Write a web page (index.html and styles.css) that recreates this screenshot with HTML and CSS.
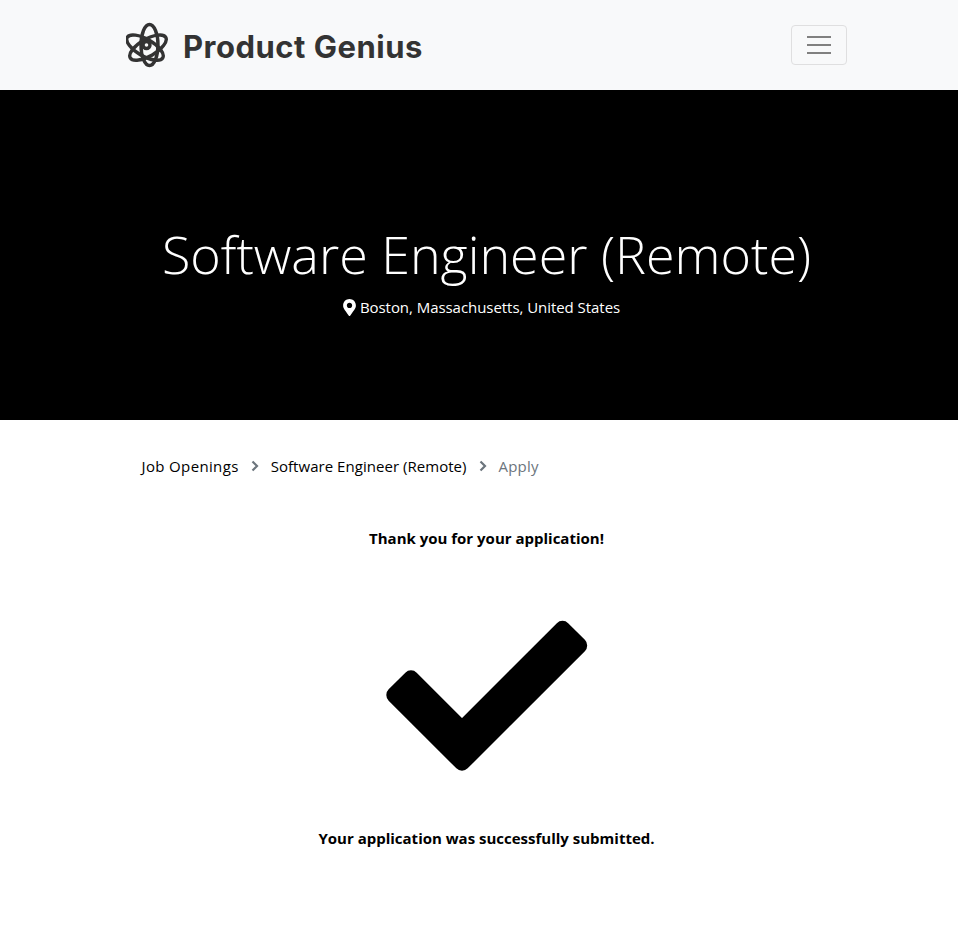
FILE: index.html
```html
<!DOCTYPE html>
<html lang="en">
<head>
<meta charset="utf-8">
<title>Software Engineer (Remote)</title>
<link rel="stylesheet" href="styles.css">
</head>
<body>
<header class="navbar">
  <div class="navbar-inner">
    <a class="brand" href="#">
      <svg class="brand-icon" viewBox="0 0 42 46" aria-hidden="true">
        <g class="atom">
          <ellipse cx="23.5" cy="23" rx="8.5" ry="20.5"/>
          <ellipse cx="23.5" cy="23" rx="8.5" ry="20.5" transform="rotate(60 20.5 23)"/>
          <ellipse cx="23.5" cy="23" rx="8.5" ry="20.5" transform="rotate(120 20.5 23)"/>
          <circle cx="20.5" cy="23" r="3.5"/>
        </g>
      </svg>
      <span class="brand-name">Product Genius</span>
    </a>
    <button class="toggler" type="button" aria-label="Menu">
      <span class="bar"></span><span class="bar"></span><span class="bar"></span>
    </button>
  </div>
</header>

<section class="hero">
  <h1 class="hero-title">Software Engineer (Remote)</h1>
  <p class="hero-location">
    <svg class="pin" viewBox="0 0 384 512" aria-hidden="true"><path d="M172.268 501.67C26.97 291.031 0 269.413 0 192 0 85.961 85.961 0 192 0s192 85.961 192 192c0 77.413-26.97 99.031-172.268 309.67-9.535 13.774-29.93 13.773-39.464 0zM192 272c44.183 0 80-35.817 80-80s-35.817-80-80-80-80 35.817-80 80 35.817 80 80 80z"/></svg>
    <span class="location-text">Boston, Massachusetts, United States</span>
  </p>
</section>

<main class="content">
  <nav class="breadcrumb">
    <a class="crumb-first" href="#">Job Openings</a>
    <svg class="chev" viewBox="0 0 8 12" aria-hidden="true"><polyline points="1.5,1.5 6,6 1.5,10.5"/></svg>
    <a class="crumb-second" href="#">Software Engineer (Remote)</a>
    <svg class="chev" viewBox="0 0 8 12" aria-hidden="true"><polyline points="1.5,1.5 6,6 1.5,10.5"/></svg>
    <span class="current">Apply</span>
  </nav>
  <div class="result">
    <p class="msg">Thank you for your application!</p>
    <svg class="check" viewBox="380 615 213 160" aria-hidden="true"><polygon points="562.5,628.8 579.2,645.5 462,762.7 394.3,695 411,678.3 462,729.3"/></svg>
    <p class="msg">Your application was successfully submitted.</p>
  </div>
</main>
</body>
</html>
```
FILE: styles.css
```css
* { box-sizing: border-box; }
html, body { margin: 0; padding: 0; }
body {
  background: #fff;
  color: #000;
  font-family: "Open Sans", "Noto Sans", "Liberation Sans", sans-serif;
  font-size: 15px;
}
a { color: inherit; text-decoration: none; }

.navbar { background: #f8f9fa; height: 90px; }
.navbar-inner {
  width: 721px;
  height: 100%;
  margin-left: 126px;
  display: flex;
  align-items: center;
  justify-content: space-between;
}
.brand { display: flex; align-items: center; gap: 15px; }
.brand-icon { width: 42px; height: 46px; display: block; }
.atom { fill: none; stroke: #333; stroke-width: 3.4; }
.brand-name {
  font-family: Inter, sans-serif;
  font-weight: 700;
  font-size: 31px;
  letter-spacing: 0.5px;
  color: #333;
  padding-top: 2px;
}
.toggler {
  width: 56px;
  height: 40px;
  padding: 0;
  background: transparent;
  border: 1px solid #dfdfe0;
  border-radius: 4px;
  display: flex;
  flex-direction: column;
  align-items: center;
  justify-content: center;
  gap: 6px;
}
.bar { display: block; width: 24px; height: 2px; background: #808080; }

.hero {
  background: #000;
  color: #fff;
  height: 330px;
  padding: 128px 111px 0 126px;
  text-align: center;
}
.hero-title {
  margin: 0;
  font-weight: 300;
  font-size: 52px;
  line-height: 72px;
}
.hero-location {
  margin: 5px 0 0;
  padding-right: 10px;
  display: flex;
  justify-content: center;
  align-items: center;
  gap: 4px;
  line-height: 24px;
}
.location-text { letter-spacing: -0.05px; }
.pin { width: 13px; height: 17px; fill: #fff; display: block; }

.content { width: 721px; margin-left: 126px; }
.breadcrumb {
  margin-top: 34px;
  padding-left: 15.5px;
  height: 24px;
  display: flex;
  align-items: center;
  gap: 12px;
  line-height: 24px;
}
.crumb-first { letter-spacing: 0.36px; }
.crumb-second { letter-spacing: 0.04px; }
.chev { width: 8px; height: 12px; fill: none; stroke: #6c757d; stroke-width: 2.2; display: block; }
.current { color: #6c757d; letter-spacing: 0.2px; }
.result { margin-top: 48px; text-align: center; }
.msg { margin: 0; font-weight: 700; line-height: 24px; }
.check { display: block; width: 213px; height: 160px; margin: 65px auto 51px; }
.check polygon { fill: #000; stroke: #000; stroke-width: 16; stroke-linejoin: round; }
```
